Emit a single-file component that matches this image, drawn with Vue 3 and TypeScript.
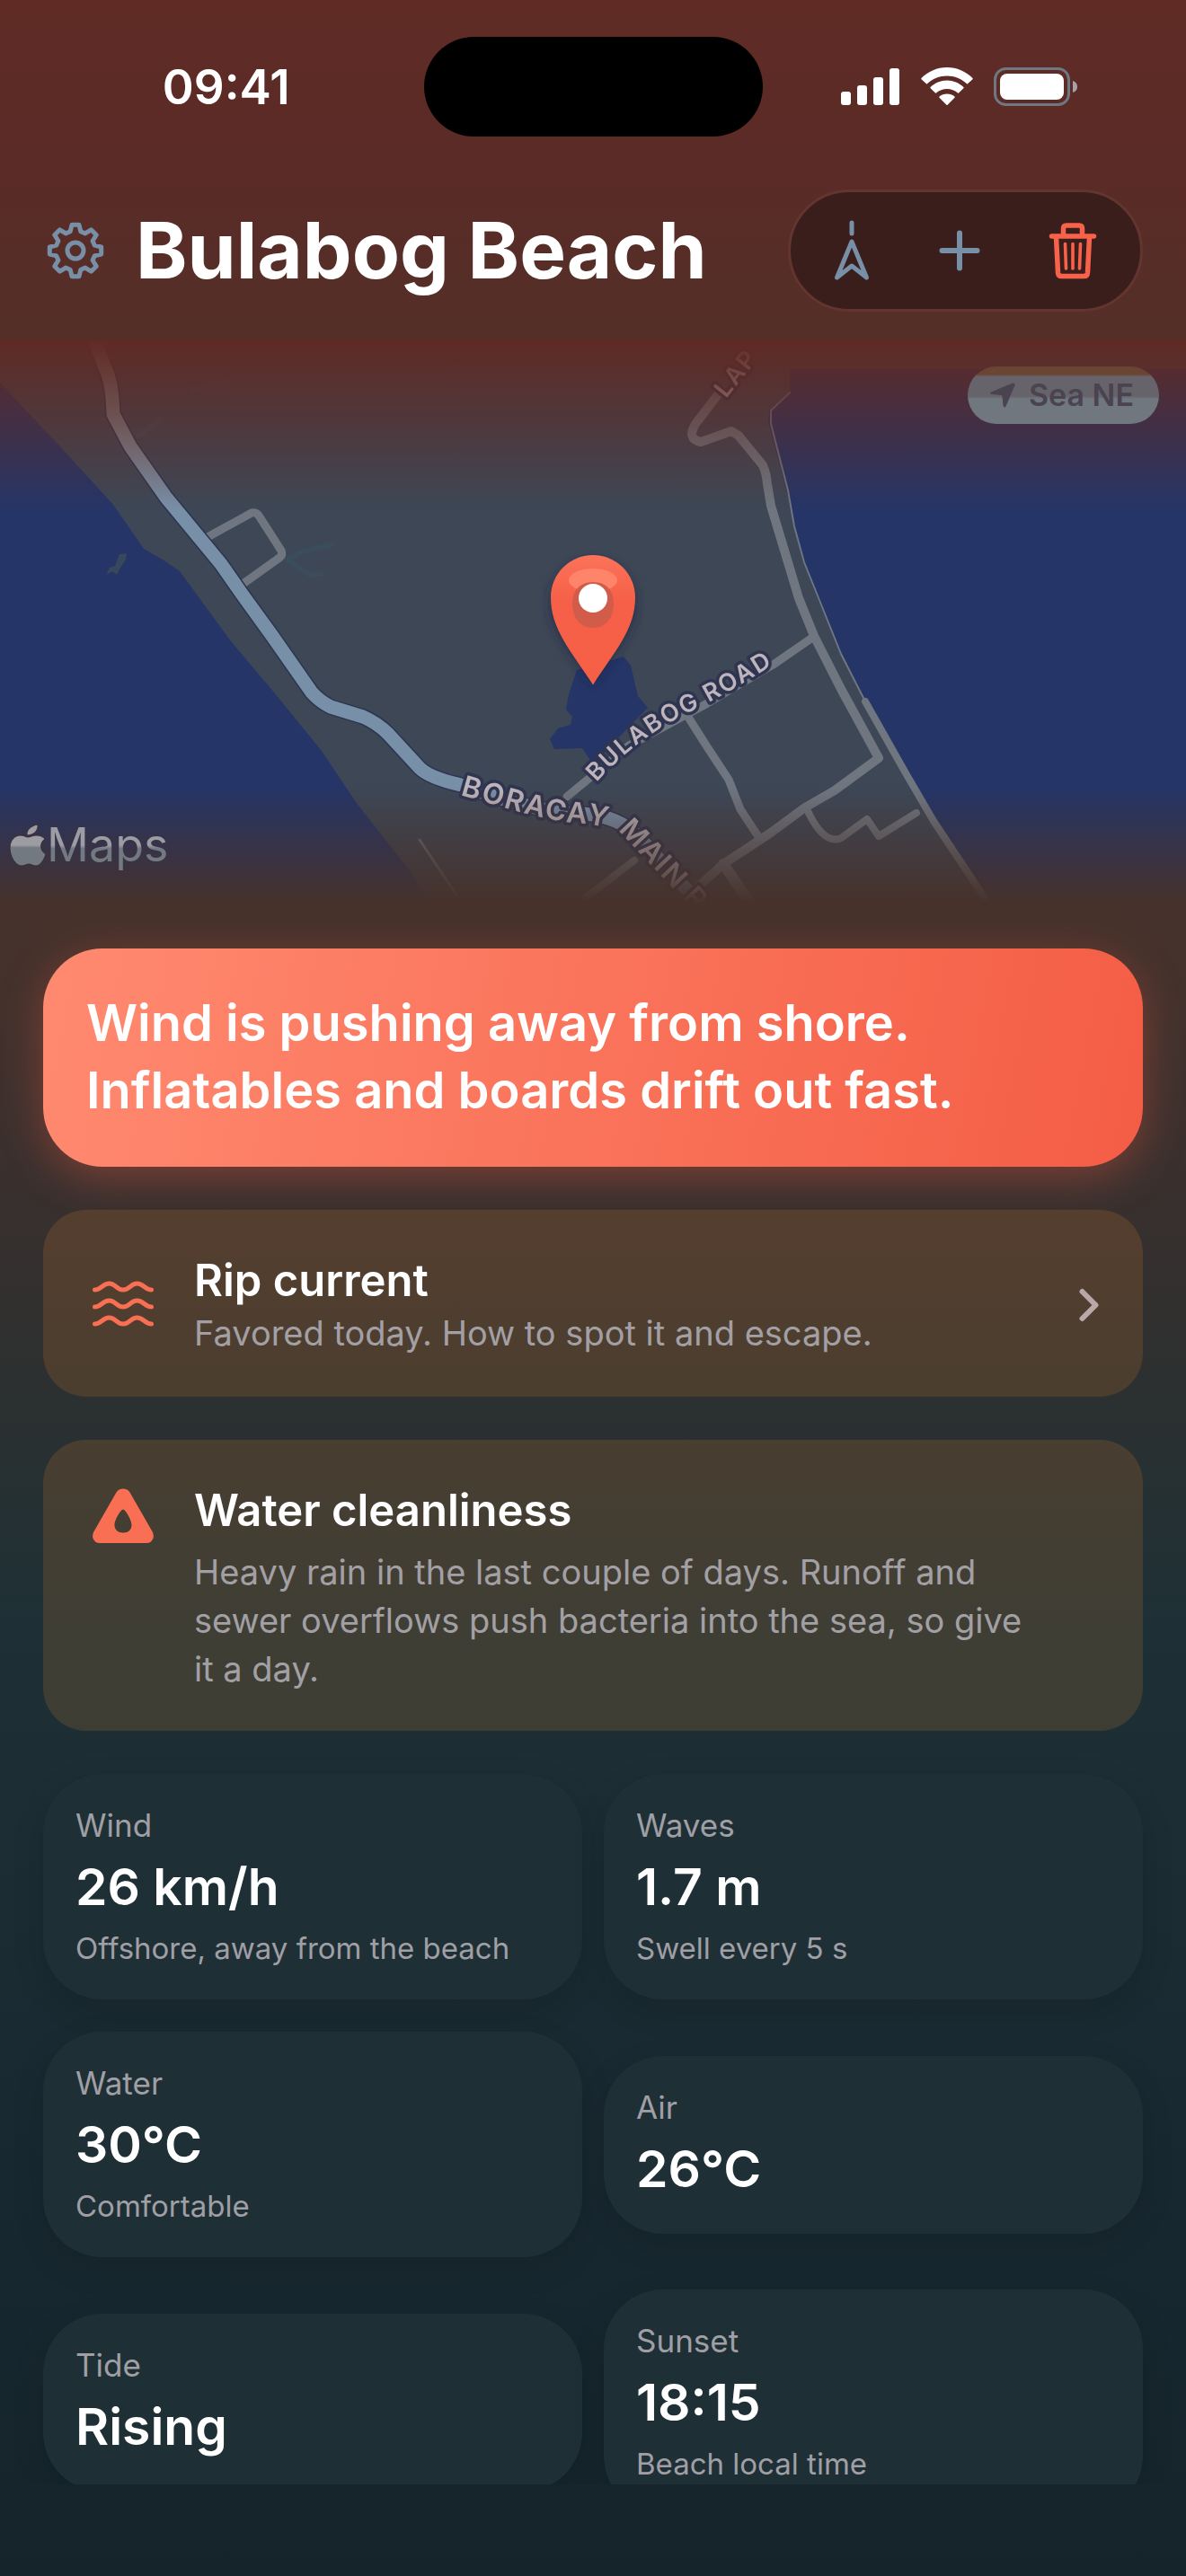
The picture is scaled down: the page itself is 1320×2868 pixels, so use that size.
<script setup lang="ts">
interface Tile {
  label: string
  value: string
  note?: string
}

const place = 'Bulabog Beach'

const tiles: Tile[] = [
  { label: 'Wind', value: '26 km/h', note: 'Offshore, away from the beach' },
  { label: 'Waves', value: '1.7 m', note: 'Swell every 5 s' },
  { label: 'Water', value: '30°C', note: 'Comfortable' },
  { label: 'Air', value: '26°C' },
  { label: 'Tide', value: 'Rising' },
  { label: 'Sunset', value: '18:15', note: 'Beach local time' },
]

// Outline of the eight-toothed settings gear, centred on 32,32.
function gearPath(): string {
  const points: string[] = []
  for (let i = 0; i < 8; i++) {
    const base = (i * Math.PI) / 4
    const corners: [number, number][] = [
      [-0.27, 22],
      [-0.14, 29],
      [0.14, 29],
      [0.27, 22],
    ]
    for (const [offset, radius] of corners) {
      const a = base + offset
      points.push(`${(32 + radius * Math.sin(a)).toFixed(1)} ${(32 - radius * Math.cos(a)).toFixed(1)}`)
    }
  }
  return `M${points.join('L')}Z`
}
</script>

<template>
  <div class="app">
    <div class="status">
      <time class="clock">09:41</time>
      <div class="island"></div>
      <div class="signals">
        <svg width="66" height="42" viewBox="0 0 66 42" fill="#fff" aria-hidden="true">
          <rect x="0" y="26" width="11" height="15" rx="3" />
          <rect x="18" y="19" width="11" height="22" rx="3" />
          <rect x="36" y="10" width="11" height="31" rx="3" />
          <rect x="54" y="0" width="11" height="41" rx="3" />
        </svg>
        <svg width="58" height="43" viewBox="0 0 58 43" fill="#fff" aria-hidden="true">
          <path d="M29 0C40 0 50 4.500 57.500 12Q58 12.600 57.500 13.200L52 18.300Q51.500 18.700 51 18.200C45 12.400 37.500 9.400 29 9.400S13 12.400 7 18.200Q6.500 18.700 6 18.300L.5 13.200Q0 12.600 .5 12C8 4.500 18 0 29 0Z" />
          <path d="M29 14.500C36 14.500 42.500 17.400 47.400 22Q48 22.600 47.400 23.200L42 28.500Q41.500 28.900 41 28.500C37.600 25.500 33.500 23.900 29 23.900S20.400 25.500 17 28.500Q16.500 28.900 16 28.500L10.600 23.200Q10 22.600 10.600 22C15.500 17.400 22 14.500 29 14.500Z" />
          <path d="M29 29.500C32.300 29.500 35.300 30.700 37.500 32.600Q38 33.200 37.500 33.800L29.600 41.800Q29 42.400 28.400 41.800L20.500 33.800Q20 33.200 20.500 32.600C22.700 30.700 25.700 29.500 29 29.500Z" />
        </svg>
        <svg width="94" height="43" viewBox="0 0 94 43" aria-hidden="true">
          <rect x="1.500" y="1.500" width="82" height="40" rx="12" fill="none" stroke="#6f7780" stroke-width="3" />
          <rect x="7" y="7" width="71" height="29" rx="8" fill="#fff" />
          <path d="M88 15Q93 16.500 93 21.500T88 28Z" fill="#a5a2a6" />
        </svg>
      </div>
    </div>

    <header class="header">
      <button class="gear" type="button" aria-label="Settings">
        <svg width="64" height="64" viewBox="0 0 64 64" fill="none" stroke="#788fa8" stroke-width="5" stroke-linejoin="round" aria-hidden="true">
          <path :d="gearPath()" />
          <circle cx="32" cy="32" r="9" />
        </svg>
      </button>
      <h1 class="title">{{ place }}</h1>
      <div class="toolbar">
        <button type="button" aria-label="Face the sea">
          <svg width="40" height="68" viewBox="0 0 40 68" fill="none" stroke="#788fa8" stroke-width="5" stroke-linecap="round" stroke-linejoin="round" aria-hidden="true">
            <path d="M20 3V15" />
            <path d="M20 24L3.500 64L20 51L36.500 64Z" />
          </svg>
        </button>
        <button type="button" aria-label="Add beach">
          <svg width="46" height="46" viewBox="0 0 46 46" fill="none" stroke="#788fa8" stroke-width="6" stroke-linecap="round" aria-hidden="true">
            <path d="M23 3.500V42.500M3.500 23H42.500" />
          </svg>
        </button>
        <button type="button" aria-label="Delete beach">
          <svg width="54" height="64" viewBox="0 0 54 64" fill="none" stroke="#f8614a" stroke-width="5.500" stroke-linecap="round" stroke-linejoin="round" aria-hidden="true">
            <path d="M3.500 16H50.500" />
            <path d="M16.500 15V7.500Q16.500 4 20 4H34Q37.500 4 37.500 7.500V15" />
            <path d="M8.500 17L10.500 56.500Q10.800 60.500 14.500 60.500H39.500Q43.200 60.500 43.500 56.500L45.500 17" />
            <path d="M18.500 24.500L19.500 52M27 24.500V52M35.500 24.500L34.500 52" stroke-width="3.600" />
          </svg>
        </button>
      </div>
    </header>

    <main class="scroller">
      <section class="map" aria-label="Map of Bulabog Beach">
        <svg class="map-canvas" viewBox="0 377 1320 655" preserveAspectRatio="xMidYMin slice" aria-hidden="true">
          <defs>
            <linearGradient id="road-main" gradientUnits="userSpaceOnUse" x1="0" y1="460" x2="0" y2="560">
              <stop offset="0" stop-color="#7d838a" />
              <stop offset="1" stop-color="#788fa8" />
            </linearGradient>
            <path id="boracay" d="M512 884C550 894 600 912 640 915C665 917 682 920 698 934L800 1042" />
            <path id="bulabog" d="M664 870C687 845 720 815 765 793C800 777 840 752 880 727" />
            <path id="lapu" d="M808 443L878 355" />
          </defs>

          <rect y="377" width="1320" height="655" fill="#3d4756" />
          <g fill="#253567">
            <path d="M0 425L27 454L65 494L126 561L160 610L181 622L200 635L257 713L305 770L358 835L396 892L457 970L495 1032H0Z" />
            <path d="M879 410V435L856 456L855 469L866 509L877 551L883 585L894 625L913 673L934 724L963 782L1009 858L1039 913L1081 970L1122 1032H1320V410Z" />
            <path d="M642 745L633 772L630 789L637 797L635 806L621 810L612 822L617 833L648 832L660 850L702 806L721 787L710 774L702 740L694 730Z" />
          </g>
          <path d="M118 639L122 631L128 629L133 616L141 615L140 622L134 631L130 639L125 635Z" fill="#37475c" />

          <g fill="none" stroke-linecap="round" stroke-linejoin="round">
            <path d="M320 622L337 613L370 605M320 622L345 639L358 638M154 484L177 467M215 433L252 423" stroke="#3b4d5a" stroke-width="6" />
            <path d="M467 934L509 997" stroke="#686c74" stroke-width="3" />
            <g stroke="#6f7680">
              <path d="M231 597L280 570Q285 569 288 573L313 612Q315 617 311 620L269 650" stroke-width="9" />
              <path d="M803 433L774 471Q764 488 780 491L814 479L822 484L849 517Q853 526 854 538L858 562L889 665L906 707L936 766L978 843L929 879L896 898L858 926L805 961L740 1020" stroke-width="10" />
              <path d="M805 961L854 1032" stroke-width="12" />
              <path d="M904 709L862 738L782 785L700 829L660 862L631 886" stroke-width="9" />
              <path d="M767 799L786 829L811 867L824 900L845 932" stroke-width="9" />
              <path d="M898 900Q912 930 926 933Q934 935 939 930L965 911L978 930L1020 904" stroke-width="8" />
              <path d="M879 436L858 456L858 471L877 545L884 585L895 625L936 727L963 780L990 828" stroke-width="2" />
              <path d="M963 780L1007 858L1039 913L1118 1032" stroke-width="8" />
              <path d="M650 1000L706 957" stroke-width="8" />
            </g>
            <path d="M107 383L120 416Q125 430 126 460L145 496L185 553L246 627L269 660L303 707L347 770Q356 780 368 786L404 797Q420 804 432 816L467 854Q478 865 513 873Q600 905 650 905Q690 908 712 932L785 1012" stroke="#2b3550" stroke-width="18" />
            <path d="M107 383L120 416Q125 430 126 460L145 496L185 553L246 627L269 660L303 707L347 770Q356 780 368 786L404 797Q420 804 432 816L467 854Q478 865 513 873Q600 905 650 905Q690 908 712 932L785 1012" stroke="url(#road-main)" stroke-width="15" />
          </g>

          <g class="road-names">
            <text class="wide"><textPath href="#boracay">BORACAY MAIN R</textPath></text>
            <text><textPath href="#bulabog">BULABOG ROAD</textPath></text>
            <text><textPath href="#lapu">LAP</textPath></text>
          </g>
        </svg>
        <p class="maps-logo">
          <svg width="42" height="50" viewBox="0 0 42 50" aria-hidden="true">
            <defs>
              <linearGradient id="apple-fill" x1="0" y1="0" x2="0" y2="1">
                <stop offset=".5" stop-color="#9d9ca2" />
                <stop offset=".56" stop-color="#727981" />
              </linearGradient>
            </defs>
            <path d="M32 2C33 9 27 14 20 14C19 8 25 3 32 2ZM21 16C24 16 26 14 31 14C35 14 38 16 40 18C34 22 34 31 41 35C39 41 35 48 30 48C27 48 25 46 22 46S17 48 14 48C7 48 1 37 1 28C1 19 7 14 13 14C16 14 19 16 21 16Z" fill="url(#apple-fill)" stroke="#3b2c33" stroke-width="1" />
          </svg>
          <span>Maps</span>
        </p>
        <span class="sea-badge">
          <svg width="30" height="30" viewBox="0 0 30 30" fill="#4a4450" aria-hidden="true">
            <path d="M28 2Q29 2.500 28.500 4L18.500 27.500Q16.500 29.500 15.500 27L14.500 16Q14.300 15 13.300 15L2.500 14Q0 13 2 11.500L25.500 1.700Q27 1.200 28 2Z" />
          </svg>
          <b>Sea NE</b>
        </span>
        <svg class="pin" width="120" height="170" viewBox="600 600 120 170" role="img" aria-label="Beach location">
          <defs>
            <linearGradient id="pin-body" x1="0" y1="0" x2="0" y2="1">
              <stop offset="0" stop-color="#fb7359" />
              <stop offset=".35" stop-color="#f66048" />
              <stop offset="1" stop-color="#f45f46" />
            </linearGradient>
            <filter id="pin-shadow" x="-50%" y="-30%" width="200%" height="160%">
              <feGaussianBlur stdDeviation="6" />
            </filter>
          </defs>
          <path d="M660 623C686 623 707 644 707 670C707 704 680 730 660 761C640 730 613 704 613 670C613 644 634 623 660 623Z" fill="#1d2240" opacity=".7" filter="url(#pin-shadow)" />
          <path d="M660 617C686 617 707 638 707 664C707 700 684 724 660 761.500C636 724 613 700 613 664C613 638 634 617 660 617Z" fill="url(#pin-body)" />
          <ellipse cx="660" cy="645" rx="27" ry="13" fill="#ff8469" />
          <path d="M660 647C676 647 683 658 683 671C683 688 673 698 660 698S637 688 637 671C637 658 644 647 660 647Z" fill="#d25c4a" />
          <circle cx="660" cy="665" r="16" fill="#fff" />
        </svg>
      </section>

      <section class="alert" role="alert">
        <p>Wind is pushing away from shore. Inflatables and boards drift out fast.</p>
      </section>

      <button class="card rip" type="button">
        <svg class="card-icon" width="70" height="54" viewBox="0 0 70 54" fill="none" stroke="#f86f53" stroke-width="5" stroke-linecap="round" aria-hidden="true">
          <path v-for="y in [8, 27, 46]" :key="y" :d="`M3.500 ${y + 2}C11 ${y + 2} 12 ${y - 5} 19.500 ${y - 5}S27 ${y + 2} 35 ${y + 2}S43 ${y - 5} 50.500 ${y - 5}S59 ${y + 2} 66.500 ${y + 2}`" />
        </svg>
        <span class="card-text">
          <strong>Rip current</strong>
          <span class="card-note">Favored today. How to spot it and escape.</span>
        </span>
        <svg class="chevron" width="24" height="38" viewBox="0 0 24 38" fill="none" stroke="#b8a8a8" stroke-width="6" stroke-linecap="round" stroke-linejoin="round" aria-hidden="true">
          <path d="M4.500 4L19.500 19L4.500 34" />
        </svg>
      </button>

      <article class="card clean">
        <svg class="card-icon" width="70" height="64" viewBox="0 0 70 64" aria-hidden="true">
          <path fill-rule="evenodd" d="M27.500 5.500Q30 1.500 35 1.500T42.500 5.500L68 50Q70 55 67.500 58.500Q65.500 62 61 62H9Q4.500 62 2.500 58.500Q0 55 2 50ZM35 24.500C32.500 24.500 25.500 36 25.500 42C25.500 47 29.500 50.500 35 50.500S44.500 47 44.500 42C44.500 36 37.500 24.500 35 24.500Z" fill="#f86f53" />
        </svg>
        <div class="card-text">
          <h2>Water cleanliness</h2>
          <p class="card-note">Heavy rain in the last couple of days. Runoff and sewer overflows push bacteria into the sea, so give it a day.</p>
        </div>
      </article>

      <dl class="tiles">
        <div v-for="tile in tiles" :key="tile.label" class="tile">
          <dt>{{ tile.label }}</dt>
          <dd class="value">{{ tile.value }}</dd>
          <dd v-if="tile.note" class="note">{{ tile.note }}</dd>
        </div>
      </dl>
    </main>
  </div>
</template>

<style>
body {
  margin: 0;
  background: #15242b;
}
</style>

<style scoped>
.app {
  height: 100vh;
  display: flex;
  flex-direction: column;
  box-sizing: border-box;
  padding-bottom: 102px;
  color: #fff;
  font-family: Inter, "Liberation Sans", sans-serif;
  background: linear-gradient(#602b25 0%, #5a2b27 7%, #542f28 13%, #46322c 36%, #39302e 46%, #2c3030 54%, #1e3036 63%, #1c2d34 70%, #182830 85%, #15242b 100%);
}

button {
  border: 0;
  padding: 0;
  background: none;
  color: inherit;
  font: inherit;
  text-align: left;
}

svg {
  display: block;
}

p,
h1,
h2,
dl,
dd {
  margin: 0;
}

.status {
  display: grid;
  grid-template-columns: 1fr 377px 1fr;
  align-items: center;
  padding-top: 41px;
}

.clock {
  padding-left: 32px;
  text-align: center;
  font-size: 53px;
  line-height: 64px;
  font-weight: 600;
}

.island {
  height: 111px;
  border-radius: 56px;
  background: #000;
}

.signals {
  display: flex;
  align-items: center;
  justify-content: center;
  gap: 23px;
  padding-right: 32px;
}

.header {
  display: flex;
  align-items: center;
  padding: 59px 48px 31px 52px;
}

.title {
  flex: 1;
  margin-left: 35px;
  font-size: 87px;
  line-height: 108px;
  font-weight: 700;
  white-space: nowrap;
}

.toolbar {
  display: flex;
  align-items: center;
  justify-content: space-between;
  box-sizing: border-box;
  width: 395px;
  height: 136px;
  padding: 0 48px;
  border: 3px solid #64352f;
  border-radius: 68px;
  background: #3a1e1b;
}

.scroller {
  flex: 1;
  min-height: 0;
  overflow-y: auto;
  scrollbar-width: none;
}

.map {
  position: relative;
  height: 655px;
}

.map::after {
  content: "";
  position: absolute;
  top: 0;
  left: 0;
  right: 0;
  height: 190px;
  background: linear-gradient(#602a24, rgba(96, 42, 36, 0));
}

.map-canvas {
  width: 100%;
  height: 100%;
  mask-image: linear-gradient(#000 498px, transparent 628px);
}

.road-names {
  fill: #bdb5bb;
  stroke: #2f3450;
  stroke-width: 7px;
  stroke-linejoin: round;
  paint-order: stroke;
  font-size: 27px;
  font-weight: 600;
  letter-spacing: 2px;
}

.wide {
  font-size: 32px;
}

.maps-logo {
  position: absolute;
  z-index: 1;
  left: 10px;
  bottom: 60px;
  display: flex;
  align-items: center;
  font-size: 52px;
  line-height: 64px;
}

.maps-logo span {
  color: transparent;
  background: linear-gradient(#9d9ca2 50%, #727981 56%);
  background-clip: text;
}

.sea-badge {
  position: absolute;
  z-index: 1;
  top: 30px;
  right: 30px;
  display: flex;
  align-items: center;
  gap: 14px;
  box-sizing: border-box;
  height: 64px;
  padding: 0 28px 0 24px;
  border-radius: 32px;
  color: #4a4450;
  font-size: 34px;
  line-height: 40px;
  background: linear-gradient(#6b4533 14%, #67636a 18%, #67636a 52%, #70777e 56%);
}

.sea-badge b {
  font-weight: 600;
}

.pin {
  position: absolute;
  z-index: 1;
  top: 223px;
  left: 50%;
  margin-left: -60px;
}

.alert {
  position: relative;
  margin: 23px 48px 48px;
  padding: 46px 48px 47px;
  border-radius: 66px;
  background: linear-gradient(101deg, #ff8a70, #f45d45);
  box-shadow: 0 12px 48px rgba(245, 93, 69, 0.35);
  font-size: 56px;
  line-height: 75px;
  font-weight: 600;
}

.card {
  position: relative;
  display: flex;
  box-sizing: border-box;
  width: calc(100% - 96px);
  margin: 0 48px 48px;
  border-radius: 48px;
  background: rgba(255, 146, 48, 0.15);
}

.rip {
  align-items: center;
  padding: 48px 48px 44px;
}

.clean {
  padding: 48px 48px 42px;
}

.card-icon {
  flex: none;
  margin-left: 6px;
}

.clean .card-icon {
  margin-top: 5px;
}

.card-text {
  flex: 1;
  margin-left: 44px;
}

.card-text strong,
.card-text h2 {
  display: block;
  font-size: 49px;
  line-height: 62px;
  font-weight: 600;
}

.card-note {
  display: block;
  color: #a3a0a5;
  font-size: 38px;
  line-height: 54px;
}

.clean .card-note {
  margin-top: 10px;
  padding-right: 72px;
}

.tiles {
  display: grid;
  grid-template-columns: 1fr 1fr;
  align-items: center;
  gap: 36px 24px;
  margin: 0 48px;
}

.tile {
  display: flex;
  flex-direction: column;
  gap: 12px;
  padding: 36px;
  border-radius: 66px;
  background: #1e3036;
  box-shadow: 0 12px 36px rgba(0, 0, 0, 0.12);
  color: #a09fa5;
}

.tile dt {
  font-size: 35px;
  line-height: 42px;
}

.tile .value {
  color: #fff;
  font-size: 57px;
  line-height: 72px;
  font-weight: 600;
}

.tile .note {
  font-size: 33px;
  line-height: 41px;
}
</style>
